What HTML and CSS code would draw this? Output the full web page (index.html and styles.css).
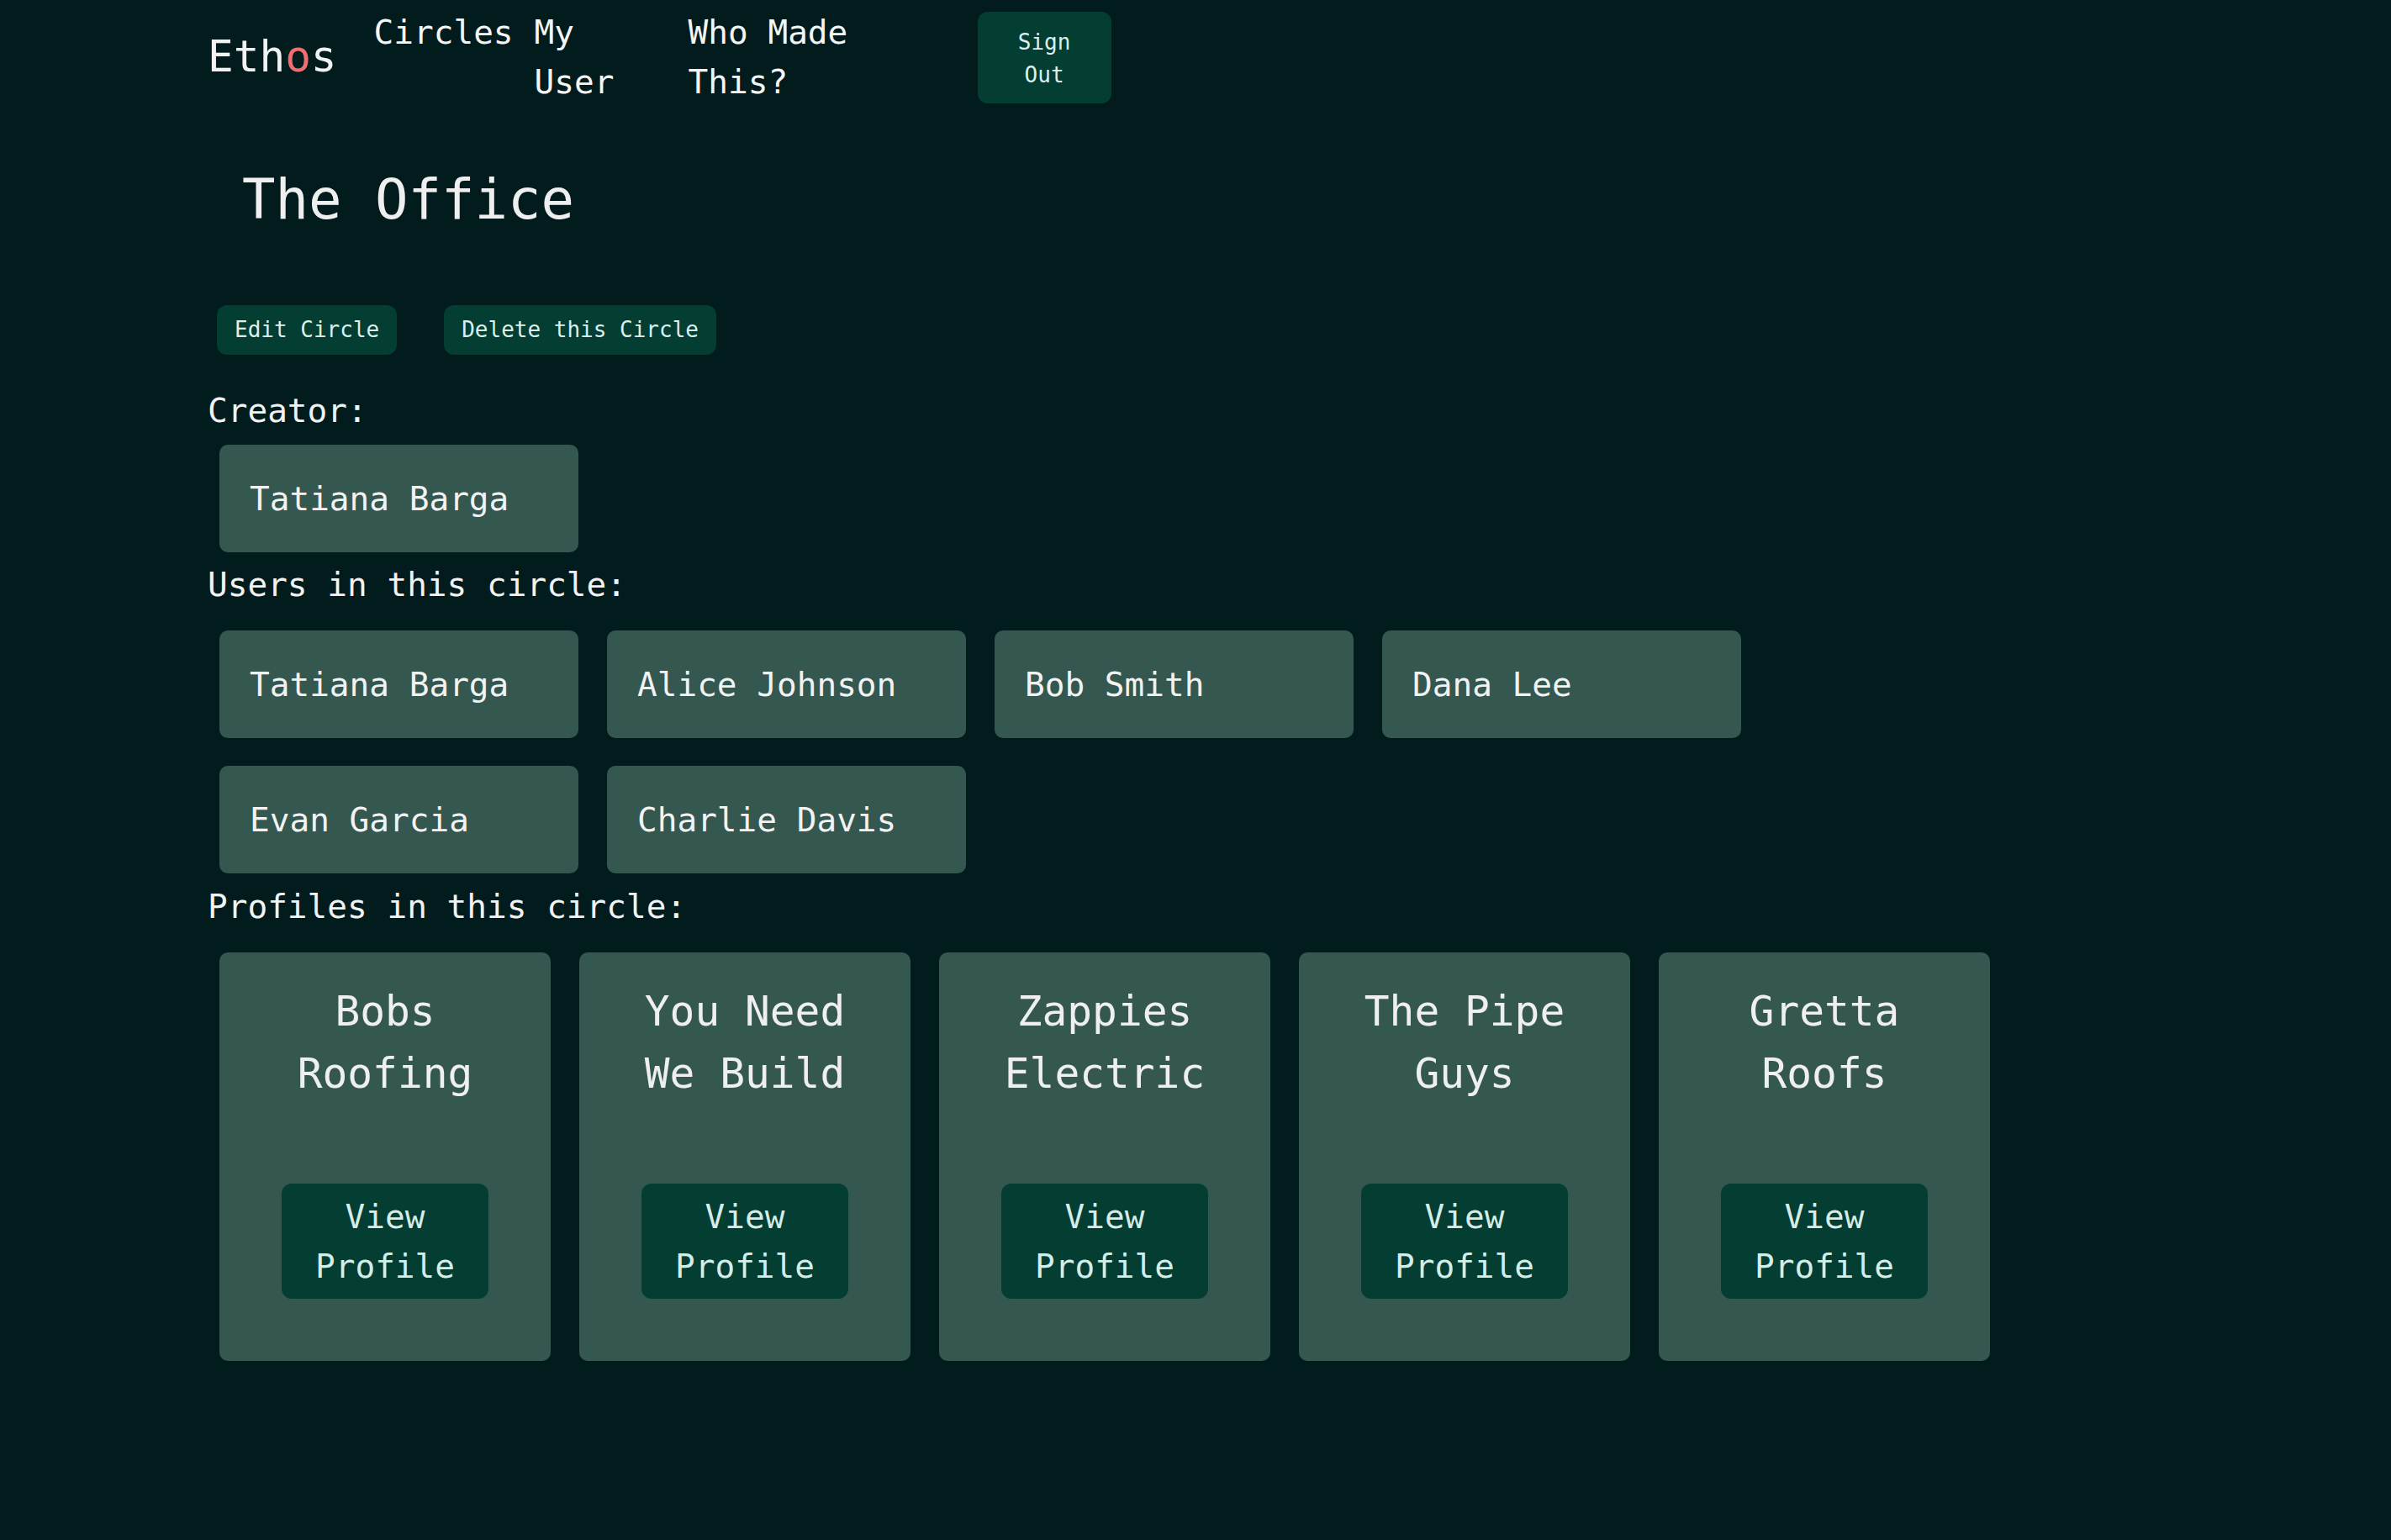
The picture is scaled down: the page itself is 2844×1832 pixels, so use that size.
FILE: index.html
```html
<!DOCTYPE html>
<html lang="en">
<head>
<meta charset="utf-8">
<title>Ethos - The Office</title>
<link rel="stylesheet" href="styles.css">
</head>
<body>
<header class="topbar">
  <a class="brand" href="#">Eth<span class="brand-o">o</span>s</a>
  <nav class="nav">
    <a class="nav-link nav-circles" href="#">Circles</a>
    <a class="nav-link nav-user" href="#">My User</a>
    <a class="nav-link nav-who" href="#">Who Made This?</a>
  </nav>
  <button class="btn btn-signout">Sign Out</button>
</header>

<main class="page">
  <h1 class="circle-title">The Office</h1>

  <div class="actions">
    <button class="btn btn-small">Edit Circle</button>
    <button class="btn btn-small">Delete this Circle</button>
  </div>

  <p class="label label-creator">Creator:</p>
  <div class="list list-creator">
    <div class="user-card">Tatiana Barga</div>
  </div>

  <p class="label">Users in this circle:</p>
  <div class="list list-users">
    <div class="user-card">Tatiana Barga</div>
    <div class="user-card">Alice Johnson</div>
    <div class="user-card">Bob Smith</div>
    <div class="user-card">Dana Lee</div>
    <div class="user-card">Evan Garcia</div>
    <div class="user-card">Charlie Davis</div>
  </div>

  <p class="label label-profiles">Profiles in this circle:</p>
  <div class="list list-profiles">
    <div class="profile-card">
      <h3 class="profile-name">Bobs Roofing</h3>
      <button class="btn btn-view">View Profile</button>
    </div>
    <div class="profile-card">
      <h3 class="profile-name">You Need We Build</h3>
      <button class="btn btn-view">View Profile</button>
    </div>
    <div class="profile-card">
      <h3 class="profile-name">Zappies Electric</h3>
      <button class="btn btn-view">View Profile</button>
    </div>
    <div class="profile-card">
      <h3 class="profile-name">The Pipe Guys</h3>
      <button class="btn btn-view">View Profile</button>
    </div>
    <div class="profile-card">
      <h3 class="profile-name">Gretta Roofs</h3>
      <button class="btn btn-view">View Profile</button>
    </div>
  </div>
</main>
</body>
</html>
```

FILE: styles.css
```css
* {
  box-sizing: border-box;
}

html, body {
  margin: 0;
  padding: 0;
  background: #021c1e;
  min-height: 100%;
}

body {
  font-family: "DejaVu Sans Mono", "Liberation Mono", monospace;
  color: #f2f2f2;
  font-size: 39.4px;
  line-height: 59px;
  min-height: 1832px;
}

a {
  color: inherit;
  text-decoration: none;
}

/* ---------- header ---------- */
.topbar {
  display: flex;
  align-items: center;
  padding: 9px 0 9px 247px;
}

.brand {
  font-size: 51px;
  line-height: 76px;
  color: #f2f2f2;
  margin-right: 44px;
}

.brand-o {
  color: #f06e6e;
}

.nav {
  display: flex;
  align-items: flex-start;
  align-self: stretch;
}

.nav-link {
  display: block;
  font-size: 39.4px;
  line-height: 59px;
  color: #f5f5f5;
}

.nav-circles {
  margin-right: 25px;
}

.nav-user {
  width: 150px;
  margin-right: 33px;
}

.nav-who {
  width: 200px;
  margin-right: 144px;
}

/* ---------- buttons ---------- */
.btn {
  font-family: "DejaVu Sans Mono", "Liberation Mono", monospace;
  background: #043d31;
  color: #dcefeb;
  border: none;
  border-radius: 12px;
  cursor: pointer;
  text-align: center;
}

.btn-signout {
  width: 159px;
  padding: 17px 20px 14px;
  font-size: 26px;
  line-height: 39px;
}

.btn-small {
  font-size: 26px;
  line-height: 39px;
  padding: 10px 21px;
}

.btn-view {
  width: 246px;
  font-size: 39.4px;
  line-height: 59px;
  padding: 9.5px 0;
  margin-top: auto;
  color: #d6ece8;
}

/* ---------- page ---------- */
.page {
  padding-left: 247px;
}

.circle-title {
  margin: 52px 0 0;
  padding-left: 41px;
  font-size: 65.6px;
  line-height: 98px;
  font-weight: normal;
  color: #efefef;
}

.actions {
  display: flex;
  gap: 56px;
  margin: 77px 0 0 11px;
}

.label {
  margin: 9px 0 0;
  font-size: 39.4px;
  line-height: 59px;
  color: #f2f2f2;
}

.label-creator {
  margin-top: 37px;
}

.label-profiles {
  margin-top: 10px;
}

.list {
  display: flex;
  flex-wrap: wrap;
  gap: 33px 34px;
  width: 2200px;
  margin: 25px 0 0 14px;
}

.list-creator {
  margin-top: 11px;
}

.user-card {
  width: 427px;
  height: 128px;
  padding: 34.5px 36px;
  background: #345750;
  border-radius: 10px;
  color: #f2f2f2;
  white-space: nowrap;
}

.profile-card {
  width: 394px;
  height: 486px;
  padding: 33px 40px 74px;
  background: #345750;
  border-radius: 10px;
  display: flex;
  flex-direction: column;
  align-items: center;
}

.profile-name {
  margin: 0;
  font-size: 49.5px;
  line-height: 74.25px;
  font-weight: normal;
  text-align: center;
  color: #efefef;
}
```
